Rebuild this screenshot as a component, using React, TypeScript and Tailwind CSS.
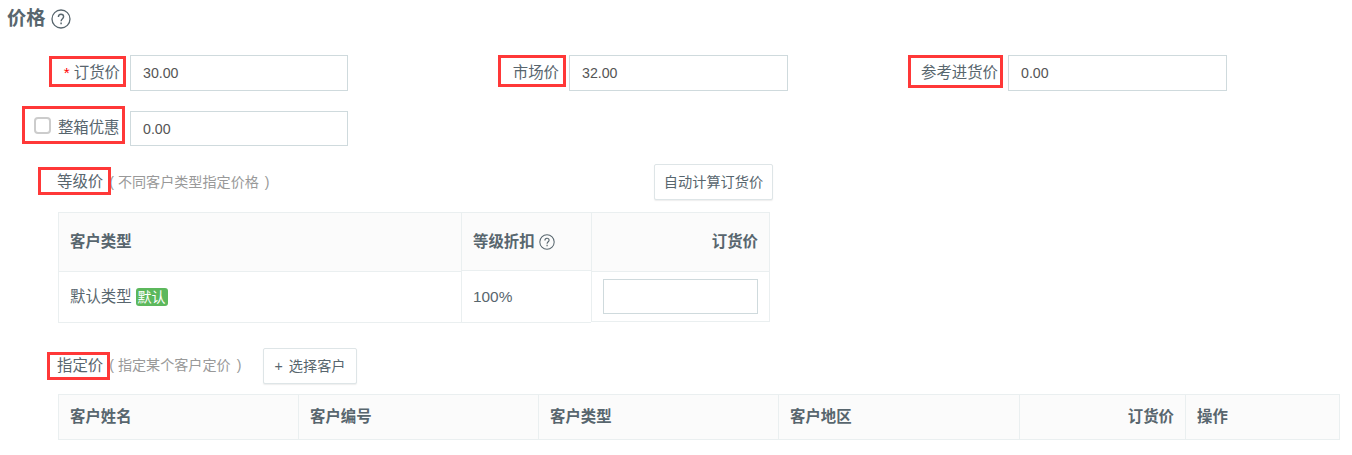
import React from "react";

const HelpIcon: React.FC<{ className?: string }> = ({ className }) => (
  <svg viewBox="0 0 20 20" fill="none" stroke="#58666e" className={className}>
    <circle cx="10" cy="10" r="9" strokeWidth="1.3" />
    <path d="M7.4 8.1c0-1.7 1.1-2.8 2.6-2.8s2.6 1 2.6 2.5c0 1.8-2.5 2-2.5 4.4" strokeWidth="1.4" />
    <path d="M10.1 13.5v1.7" strokeWidth="1.5" />
  </svg>
);

// Red frame drawn over a label
const Mark: React.FC<{ className: string }> = ({ className }) => (
  <span className={`absolute border-3 border-[#ff3838] ${className}`} />
);

const inputClass =
  "block border border-[#cfdadd] bg-white pl-3 text-[14.2px] text-[#555] outline-none";

const buttonClass =
  "h-9 rounded-[2px] border border-[#dee5e7] bg-white text-[14.2px] whitespace-nowrap shadow-[0_1px_1px_rgba(90,90,90,0.1)]";

const customerColumns = [
  { title: "客户姓名", className: "w-60" },
  { title: "客户编号", className: "w-60" },
  { title: "客户类型", className: "w-60" },
  { title: "客户地区", className: "w-[241px]" },
  { title: "订货价", className: "w-[166px] text-right" },
  { title: "操作", className: "w-[154px]" },
];

const App: React.FC = () => {
  return (
    <div className="h-[455px] w-[1352px] overflow-hidden bg-white font-['Liberation_Sans','Noto_Sans_CJK_SC',sans-serif] text-[15.4px] leading-5 text-[#58666e]">
      {/* Title */}
      <div className="flex h-[38px] items-center pl-[7px]">
        <h1 className="text-[19.2px] font-bold">价格</h1>
        <HelpIcon className="ml-[5.6px] h-5 w-5" />
      </div>

      {/* Prices */}
      <div className="flex pt-[17px]">
        <div className="flex w-[439px]">
          <label className="relative w-[130px] pt-2 pr-[10px] text-right">
            <span className="mr-1 text-[#f00]">*</span>订货价
            <Mark className="top-px left-[49px] h-[31px] w-[77px]" />
          </label>
          <input className={`${inputClass} h-9 w-[218px]`} defaultValue="30.00" />
        </div>
        <div className="flex w-[439px]">
          <label className="relative w-[130px] pt-2 pr-[10px] text-right">
            市场价
            <Mark className="top-0 left-[59px] h-8 w-[68px]" />
          </label>
          <input className={`${inputClass} h-9 w-[219px]`} defaultValue="32.00" />
        </div>
        <div className="flex w-[439px]">
          <label className="relative w-[130px] pt-2 pr-[10px] text-right">
            参考进货价
            <Mark className="top-0 left-[30px] h-[33px] w-[95px]" />
          </label>
          <input className={`${inputClass} h-9 w-[219px]`} defaultValue="0.00" />
        </div>
      </div>
      <div className="flex pt-5">
        <label className="relative flex w-[130px] justify-end pt-[7px] pr-[10.5px]">
          <span className="-mt-px mr-[6.5px] block h-[17px] w-[17px] rounded-[4px] border-2 border-[#ccc] bg-white" />
          整箱优惠
          <Mark className="-top-[5px] left-[22px] h-[38px] w-[103px]" />
        </label>
        <input className={`${inputClass} h-[35px] w-[218px]`} defaultValue="0.00" />
      </div>

      {/* Price by customer level */}
      <div className="flex w-[773px] pt-[18px] pl-[57px]">
        <div className="relative flex pt-2">
          <span>等级价</span>
          <span className="ml-[6px] text-[14.1px] text-[#999]">
            <span className="mr-1">(</span>不同客户类型指定价格<span className="ml-[6px]">)</span>
          </span>
          <Mark className="top-[3px] -left-[19px] h-7 w-[73px]" />
        </div>
        <button className={`${buttonClass} ml-auto w-[119px]`}>自动计算订货价</button>
      </div>
      <div className="mt-3 ml-[58px] flex w-[712px] items-start border-t border-l border-[#eaeff0]">
        <div className="w-[402px]">
          <div className="h-[59px] border-b border-[#eaeff0] bg-[#fbfbfb] pt-[19px] pl-[11px] font-bold">
            客户类型
          </div>
          <div className="flex h-[51px] border-b border-[#eaeff0] pt-[15px] pl-[11px]">
            默认类型
            <span className="mt-[1px] ml-1 h-[18px] w-8 rounded-[3px] bg-[#5cb85c] text-center text-[14px] leading-[18px] text-white">
              默认
            </span>
          </div>
        </div>
        <div className="w-[130px] border-l border-[#eaeff0]">
          <div className="flex h-[58px] border-b border-[#eaeff0] bg-[#fbfbfb] pt-[19px] pl-[11px] font-bold">
            等级折扣
            <HelpIcon className="mt-[2px] ml-[4px] h-4 w-4" />
          </div>
          <div className="h-[52px] border-b border-[#eaeff0] pt-4 pl-[11px]">100%</div>
        </div>
        <div className="w-[179px] border-x border-[#eaeff0]">
          <div className="h-[59px] border-b border-[#eaeff0] bg-[#fbfbfb] pt-[19px] pr-[11px] text-right font-bold">
            订货价
          </div>
          <div className="h-[50px] border-b border-[#eaeff0] pt-[7px] pl-[11px]">
            <input className={`${inputClass} h-[35px] w-[155px]`} />
          </div>
        </div>
      </div>

      {/* Price by customer */}
      <div className="flex pt-[25px] pl-[57px]">
        <div className="relative flex w-[206px] pt-2">
          <span>指定价</span>
          <span className="-mt-px ml-[6px] text-[14.1px] text-[#999]">
            <span className="mr-1">(</span>指定某个客户定价<span className="ml-[6px]">)</span>
          </span>
          <Mark className="top-1 -left-[10px] h-7 w-[63px]" />
        </div>
        <button className={`${buttonClass} w-[94px]`}>
          <span className="mr-[6px]">+</span>选择客户
        </button>
      </div>
      <div className="mt-[10px] ml-[58px] flex h-[46px] w-[1282px] border-y border-l border-[#eaeff0] bg-[#fbfbfb]">
        {customerColumns.map((column) => (
          <div
            key={column.title}
            className={`shrink-0 border-r border-[#eaeff0] px-[11px] pt-3 font-bold ${column.className}`}
          >
            {column.title}
          </div>
        ))}
      </div>
    </div>
  );
};

export default App;
